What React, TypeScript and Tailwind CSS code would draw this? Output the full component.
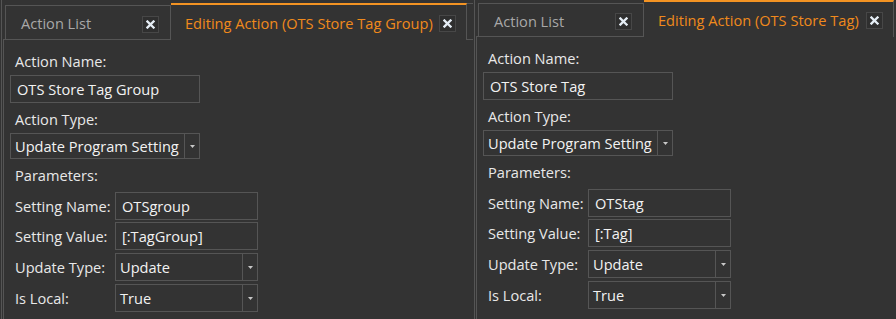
import React from "react";

function CloseBtn() {
  return (
    <div className="flex h-[17px] w-[17px] shrink-0 items-center justify-center border border-[#474747] bg-[#2f2f2f]">
      <svg width="9" height="9" viewBox="0 0 9 9">
        <path d="M1.5 1.5 L7.5 7.5 M7.5 1.5 L1.5 7.5" stroke="#e6eef6" strokeWidth="2.3" strokeLinecap="square" />
      </svg>
    </div>
  );
}

function Arrow() {
  return (
    <svg width="5" height="3" viewBox="0 0 5 3">
      <path d="M0 0 H5 L2.5 3 Z" fill="#c8c8c8" />
    </svg>
  );
}

function TextBox({ value, w }: { value: string; w: string }) {
  return (
    <div className={`flex h-[28px] ${w} items-center border border-[#555] pl-[6px] text-[#f2f2f2]`}>{value}</div>
  );
}

function Combo({ value, w, h }: { value: string; w: string; h: string }) {
  return (
    <div className={`flex ${h} ${w} items-stretch border border-[#555]`}>
      <div className="flex flex-1 items-center pl-[4px] text-[#f2f2f2]">{value}</div>
      <div className="flex w-[15px] items-center justify-center border-l border-[#555]">
        <Arrow />
      </div>
    </div>
  );
}

function Row({ label, children, mt }: { label: string; children: React.ReactNode; mt: string }) {
  return (
    <div className={`flex items-center ${mt}`}>
      <div className="ml-[5px] w-[100px] text-[#e8e8e8]">{label}</div>
      {children}
    </div>
  );
}

type PanelProps = {
  width: string;
  stripH: string;
  inactiveH: string;
  activeW: string;
  title: string;
  name: string;
  setName: string;
  setVal: string;
  third?: boolean;
};

function Panel(p: PanelProps) {
  return (
    <div className={`flex h-full ${p.width} shrink-0 overflow-hidden`}>
      <div className="ml-px w-px shrink-0 bg-[#555]" />
      <div className="flex min-w-0 flex-1 flex-col">
        <div className={`flex ${p.stripH} shrink-0 items-end`}>
          <div className="ml-px h-full w-[2px] shrink-0 border-b border-[#555]" />
          <div className={`flex ${p.inactiveH} w-[166px] shrink-0 items-center border border-[#555] pl-[15px] pr-[11px] pt-[3px]`}>
            <span className="text-[#a8a8a8]">Action List</span>
            <div className="ml-auto">
              <CloseBtn />
            </div>
          </div>
          <div
            className={`flex h-[37px] ${p.activeW} shrink-0 items-center border-t-2 border-r border-t-[#f39323] border-r-[#555] pl-[14px] pr-[10px] pt-[2px]`}
          >
            <span className="whitespace-nowrap text-[#f08a1c]">{p.title}</span>
            <div className="ml-auto">
              <CloseBtn />
            </div>
          </div>
          {p.third && <div className="h-[37px] w-[7px] shrink-0 border-y border-r border-[#555]" />}
        </div>
        <div className="ml-px flex flex-1 flex-col border-l border-[#555] pl-[6px] pt-[12px] leading-[19px]">
          <div className="ml-[5px] text-[#e8e8e8]">Action Name:</div>
          <div className="mt-[4px]">
            <TextBox value={p.name} w="w-[190px]" />
          </div>
          <div className="ml-[5px] mt-[7px] text-[#e8e8e8]">Action Type:</div>
          <div className="mt-[4px]">
            <Combo value="Update Program Setting" w="w-[190px]" h="h-[26px]" />
          </div>
          <div className="ml-[5px] mt-[7px] text-[#e8e8e8]">Parameters:</div>
          <Row label="Setting Name:" mt="mt-[7px]">
            <TextBox value={p.setName} w="w-[143px]" />
          </Row>
          <Row label="Setting Value:" mt="mt-[2px]">
            <TextBox value={p.setVal} w="w-[143px]" />
          </Row>
          <Row label="Update Type:" mt="mt-[3px]">
            <Combo value="Update" w="w-[143px]" h="h-[28px]" />
          </Row>
          <Row label="Is Local:" mt="mt-[3px]">
            <Combo value="True" w="w-[143px]" h="h-[28px]" />
          </Row>
        </div>
      </div>
    </div>
  );
}

export default function App() {
  return (
    <div className="flex h-[319px] w-[896px] overflow-hidden bg-[#333333] font-['Open_Sans',sans-serif] text-[14.6px]">
      <Panel
        width="w-[473px]"
        stripH="h-[40px]"
        inactiveH="h-[35px]"
        activeW="w-[296px]"
        title="Editing Action (OTS Store Tag Group)"
        name="OTS Store Tag Group"
        setName="OTSgroup"
        setVal="[:TagGroup]"
        third
      />
      <Panel
        width="w-[423px]"
        stripH="h-[37px]"
        inactiveH="h-[34px]"
        activeW="w-[250px]"
        title="Editing Action (OTS Store Tag)"
        name="OTS Store Tag"
        setName="OTStag"
        setVal="[:Tag]"
      />
    </div>
  );
}
